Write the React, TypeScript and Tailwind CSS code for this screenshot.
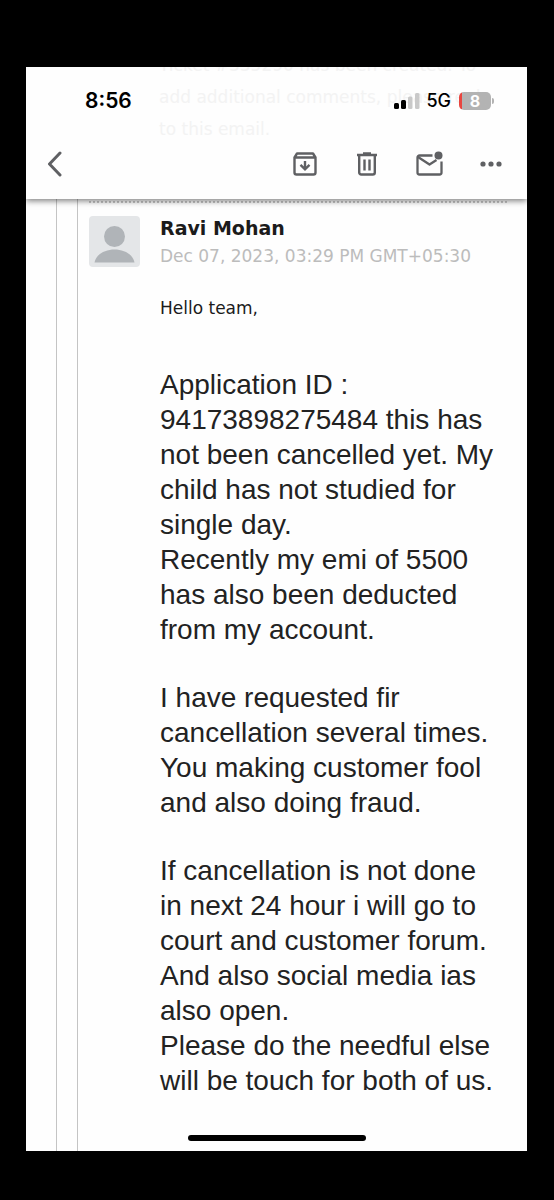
import type { ReactNode } from "react"

const paragraphs = [
  [
    "Application ID :",
    "94173898275484 this has",
    "not been cancelled yet. My",
    "child has not studied for",
    "single day.",
    "Recently my emi of 5500",
    "has also been deducted",
    "from my account.",
  ],
  [
    "I have requested fir",
    "cancellation several times.",
    "You making customer fool",
    "and also doing fraud.",
  ],
  [
    "If cancellation is not done",
    "in next 24 hour i will go to",
    "court and customer forum.",
    "And also social media ias",
    "also open.",
    "Please do the needful else",
    "will be touch for both of us.",
  ],
]

function IconButton({ label, children }: { label: string; children: ReactNode }) {
  return (
    <button type="button" aria-label={label} className="flex h-8 w-8 items-center justify-center text-[#5f6063]">
      {children}
    </button>
  )
}

function StatusBar() {
  return (
    <div className="flex items-center justify-between pr-[33px] pl-[59px]">
      <span className="font-['Inter',sans-serif] text-[21px] leading-6 font-semibold text-black">8:56</span>
      <div className="flex items-center">
        {/* Signal */}
        <svg width="26" height="18" viewBox="0 0 26 18" aria-label="Signal strength">
          <rect x="0" y="11" width="5" height="6" rx="1.5" fill="#000" />
          <rect x="7" y="8" width="5" height="9" rx="1.5" fill="#000" />
          <rect x="14" y="4.5" width="4.5" height="12.5" rx="1.5" fill="#c9c9c9" />
          <rect x="21" y="1" width="4.5" height="16" rx="1.5" fill="#c9c9c9" />
        </svg>
        <span className="ml-1.5 font-['Inter',sans-serif] text-lg leading-6 font-medium text-black">5G</span>
        {/* Battery */}
        <div className="ml-2 flex items-center">
          <div className="flex h-[18px] w-8 items-center justify-center rounded-[5px] bg-linear-to-r from-[#e8453f] from-10% to-[#b3b3b3] to-10% font-['Inter',sans-serif] text-base leading-none font-bold text-white">
            8
          </div>
          <span className="ml-px h-1.5 w-0.5 rounded-r-full bg-[#b3b3b3]" />
        </div>
      </div>
    </div>
  )
}

function Toolbar() {
  return (
    <div className="flex items-center justify-between pr-5 pl-[13px]">
      <IconButton label="Back">
        <svg width="16" height="26" viewBox="0 0 16 26" fill="none" stroke="currentColor" strokeWidth="3" strokeLinecap="round" strokeLinejoin="round">
          <path d="M13 2 2.5 13 13 24" />
        </svg>
      </IconButton>
      <div className="flex items-center gap-[30px]">
        <IconButton label="Archive">
          <svg width="24" height="24" viewBox="0 0 24 24" fill="none" stroke="currentColor" strokeWidth="2.4" strokeLinejoin="round">
            <path d="M1.500 5.500V20.500a2 2 0 0 0 2 2h17a2 2 0 0 0 2-2V5.500L20 1.500H4L1.500 5.500H22.500" />
            <path d="M12 9V17M7.500 12.800 12 17.300 16.500 12.800" strokeLinejoin="miter" />
          </svg>
        </IconButton>
        <IconButton label="Delete">
          <svg width="22" height="24" viewBox="0 0 22 24" fill="none" stroke="currentColor" strokeWidth="2.4">
            <path d="M1 3H21M7 1.500H15M3.200 3V20.500a2 2 0 0 0 2 2h11.600a2 2 0 0 0 2-2V3" />
            <path d="M8.500 7.500V18.500M13.500 7.500V18.500" />
          </svg>
        </IconButton>
        <IconButton label="Mark as unread">
          <svg width="27" height="26" viewBox="0 0 27 26" fill="none" stroke="currentColor" strokeWidth="2.3" strokeLinejoin="round">
            <path d="M16.500 4.500H3.500a2 2 0 0 0-2 2V21.500a2 2 0 0 0 2 2H23.500a2 2 0 0 0 2-2V10.500" />
            <path d="M2 6 13.500 13.500 20.500 9" />
            <circle cx="22.500" cy="4.500" r="4" fill="currentColor" stroke="none" />
          </svg>
        </IconButton>
        <IconButton label="More">
          <svg width="22" height="6" viewBox="0 0 22 6" fill="currentColor">
            <circle cx="3" cy="3" r="2.6" />
            <circle cx="11" cy="3" r="2.6" />
            <circle cx="19" cy="3" r="2.6" />
          </svg>
        </IconButton>
      </div>
    </div>
  )
}

export default function App() {
  return (
    <div className="min-h-screen bg-black pt-[67px] pr-[27px] pb-[49px] pl-[26px]">
      <main className="relative bg-[#fefefe]">
        <header className="relative z-10 bg-[#fefefe] pt-[22px] pb-[19px] shadow-[0_2px_6px_rgba(0,0,0,0.5)] [clip-path:inset(0_0_-12px_0)]">
          {/* Earlier message showing through the translucent bar */}
          <p className="absolute inset-x-0 top-0 h-20 overflow-hidden pl-[133px] font-['DejaVu_Sans',Verdana,sans-serif] text-[17px] leading-8 whitespace-nowrap text-[#f3f3f3]">
            <span className="-mt-[18px] block">Ticket #335290 has been created. To</span>
            <span className="block">add additional comments, please reply</span>
            <span className="block">to this email.</span>
          </p>
          <div className="relative flex flex-col gap-[35px]">
            <StatusBar />
            <Toolbar />
          </div>
        </header>

        <div className="ml-[30px] border-l border-[#c4c4c4]">
          <div className="ml-5 border-l border-[#c4c4c4] pt-0.5 pr-5 pl-[11px]">
            <div className="border-t-2 border-dotted border-[#c8c8c8] pt-[13px]">
              <article className="grid grid-cols-[51px_1fr] gap-x-5">
                <svg width="51" height="51" viewBox="0 0 51 51" role="img" aria-label="Ravi Mohan">
                  <rect width="51" height="51" rx="4" fill="#e4e6e8" />
                  <circle cx="25.5" cy="20.5" r="10.5" fill="#b0b4b8" />
                  <path d="M5.500 46.500C9 29 42 29 45.500 46.500Z" fill="#b0b4b8" />
                </svg>
                <div className="font-['DejaVu_Sans',Verdana,sans-serif]">
                  <h1 className="text-[19px] leading-6 font-bold text-[#1b1b1b]">Ravi Mohan</h1>
                  <time className="block text-[17px] leading-8 whitespace-nowrap text-[#bcbcbc]">Dec 07, 2023, 03:29 PM GMT+05:30</time>
                  <p className="mt-5 text-[17px] leading-8 text-[#1b1b1b]">Hello team,</p>
                </div>
                <div className="col-start-2 mt-[43px] flex flex-col gap-[33px] font-['Liberation_Sans',Arial,sans-serif] text-[28px] leading-[35px] whitespace-nowrap text-[#222]">
                  {paragraphs.map((lines) => (
                    <p key={lines[0]}>
                      {lines.map((line) => (
                        <span key={line} className="block">{line}</span>
                      ))}
                    </p>
                  ))}
                </div>
              </article>
            </div>
            <div className="h-[53px]" />
          </div>
        </div>

        {/* Home indicator */}
        <div className="absolute inset-x-0 bottom-2.5 mx-auto h-1.5 w-[178px] rounded-full bg-black" />
      </main>
    </div>
  )
}
